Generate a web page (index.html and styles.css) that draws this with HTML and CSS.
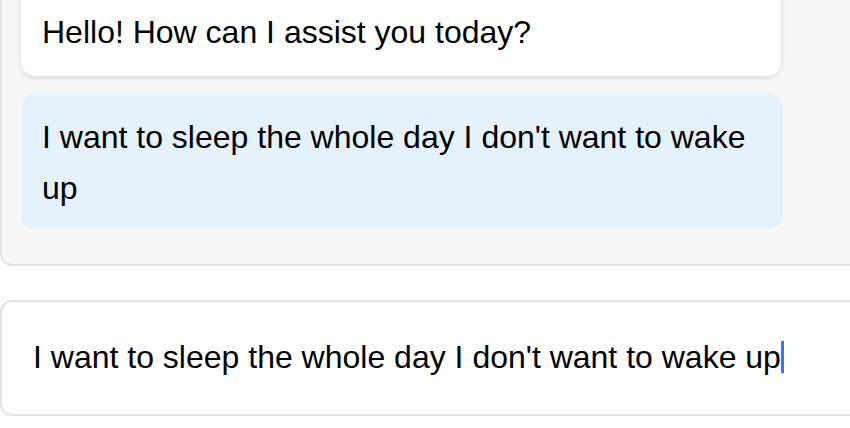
FILE: index.html
```html
<!DOCTYPE html>
<html lang="en">
<head>
<meta charset="utf-8">
<title>Chat</title>
<link rel="stylesheet" href="styles.css">
</head>
<body>
<div class="page">
  <div class="chat">
    <div class="bubble bot">Hello! How can I assist you today?</div>
    <div class="bubble user">I want to sleep the whole day I don't want to wake up</div>
  </div>
  <div class="composer">
    <div class="input">I want to sleep the whole day I don't want to wake up<span class="caret"></span></div>
  </div>
</div>
</body>
</html>
```
FILE: styles.css
```css
html, body {
  margin: 0;
  padding: 0;
  background: #ffffff;
  overflow: hidden;
}
.page {
  width: 850px;
  height: 428px;
  overflow: hidden;
  font-family: "Liberation Sans", Arial, Helvetica, sans-serif;
  font-size: 32px;
  color: #000000;
}
.chat {
  width: 900px;
  margin-top: -40px;
  background: #f7f7f7;
  border: 2px solid #e3e3e3;
  border-top: none;
  border-right: none;
  border-radius: 0 0 0 12px;
  padding: 0 0 35px 19px;
  display: flex;
  flex-direction: column;
  gap: 18px;
  box-sizing: border-box;
}
.bubble {
  width: 762px;
  box-sizing: border-box;
  border-radius: 14px;
  padding: 17px 22px 17px 21px;
  line-height: 51px;
}
.bot {
  background: #ffffff;
  padding-top: 47px;
  padding-bottom: 18px;
  box-shadow: 0 2px 5px rgba(0, 0, 0, 0.12);
  width: 760px;
}
.user {
  background: #e5f1fb;
  padding-top: 18px;
  padding-bottom: 15px;
}
.composer {
  margin-top: 34px;
  width: 900px;
  height: 116px;
  box-sizing: border-box;
  border: 2px solid #e3e3e3;
  border-right: none;
  border-radius: 12px 0 0 12px;
  display: flex;
  align-items: center;
  padding-left: 31px;
  padding-bottom: 2px;
}
.input {
  line-height: 34px;
  white-space: nowrap;
  display: flex;
  align-items: center;
}
.caret {
  display: inline-block;
  width: 3px;
  height: 32px;
  background: #3478f6;
}
```
